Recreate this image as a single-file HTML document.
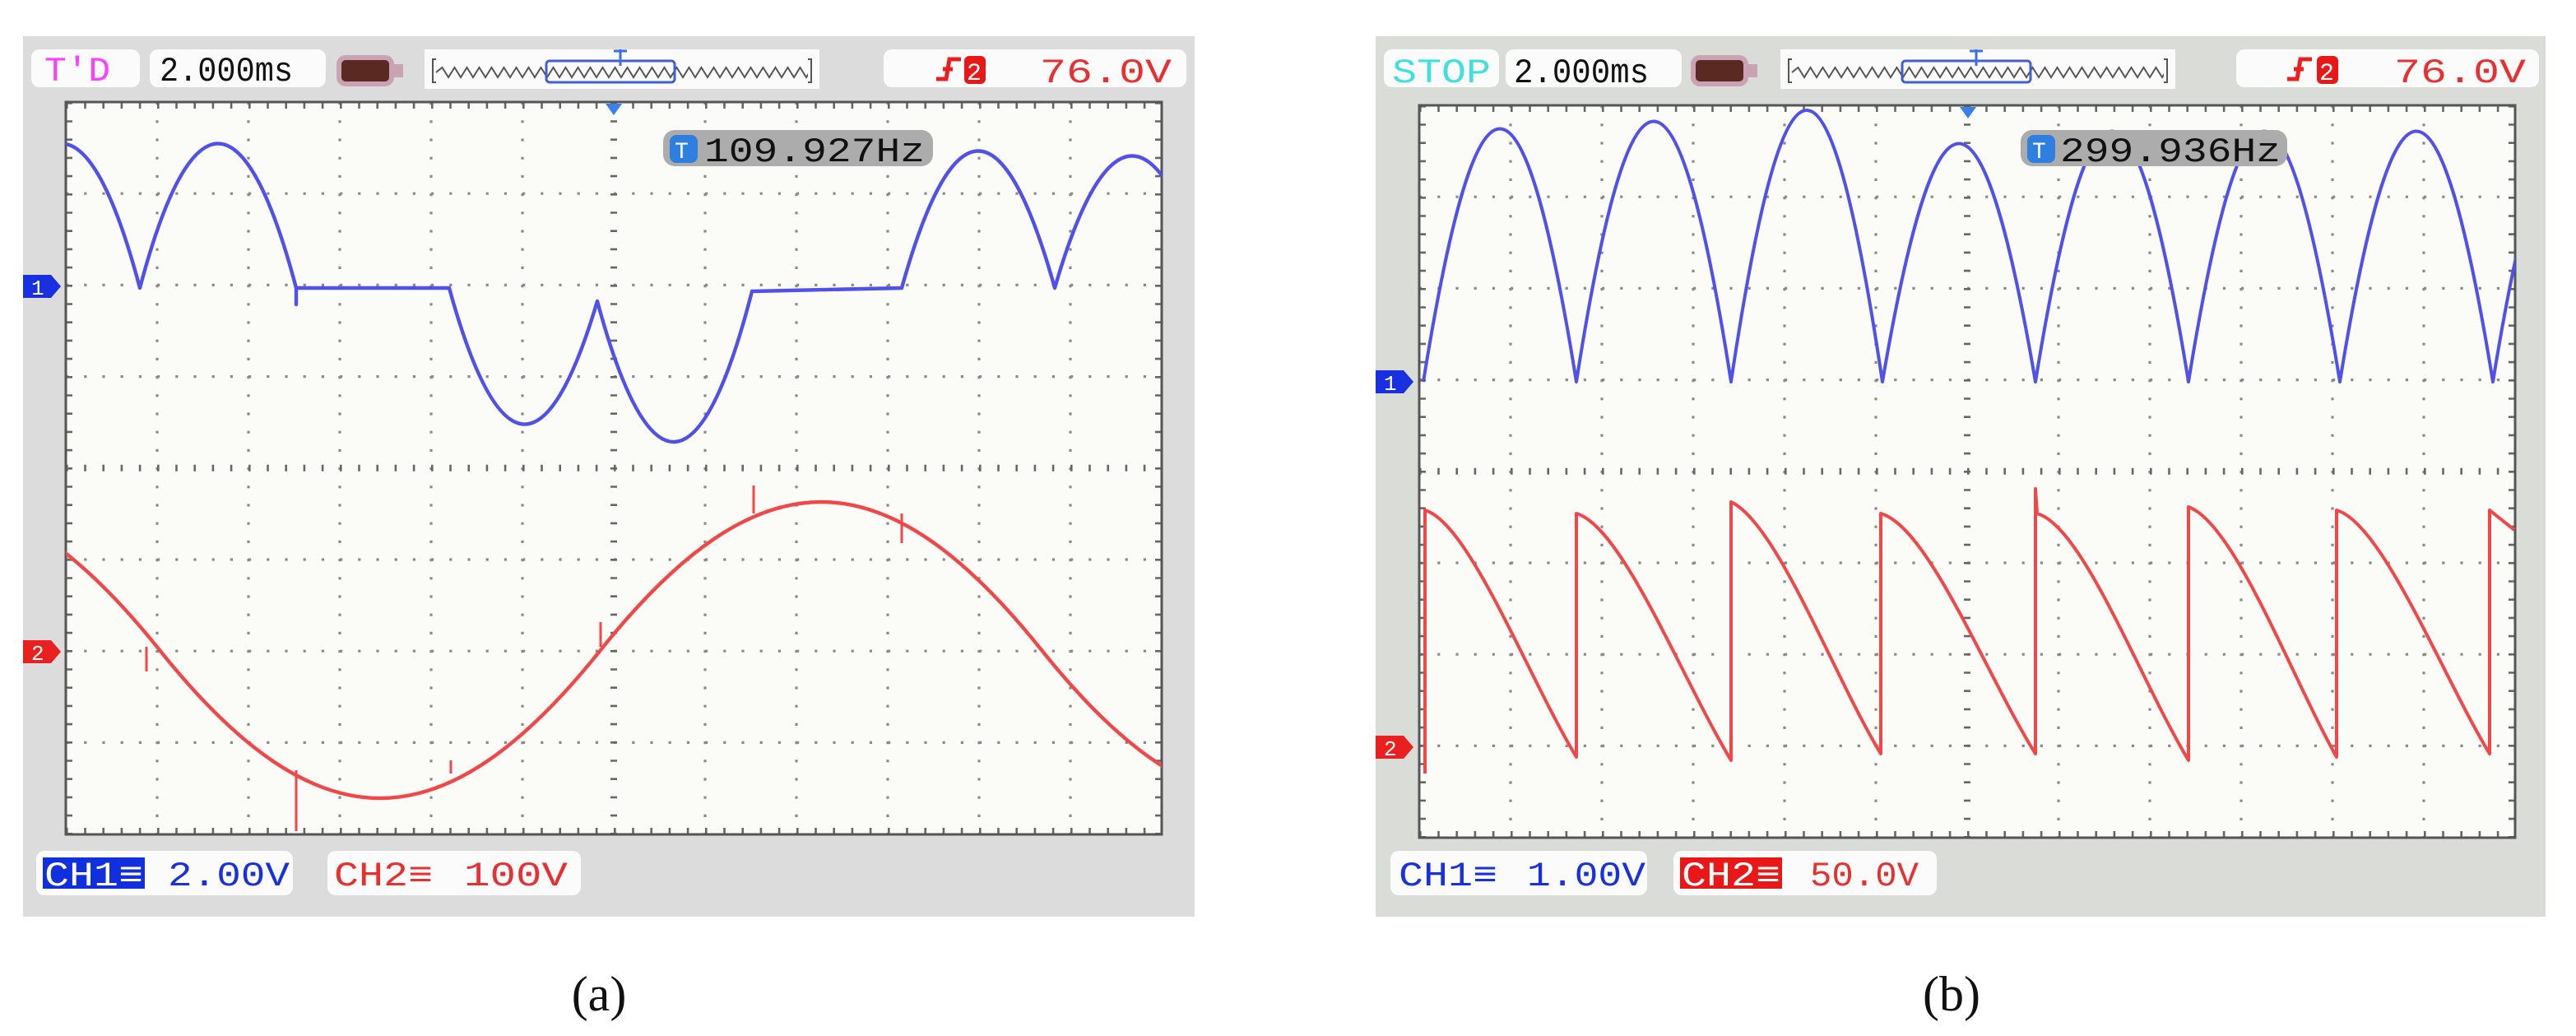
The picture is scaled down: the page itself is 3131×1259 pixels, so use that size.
<!DOCTYPE html>
<html><head><meta charset="utf-8"><style>
html,body{margin:0;padding:0;background:#fff;}
svg{display:block}
.m{font-family:"Liberation Mono",monospace;font-size:21px;}
</style></head><body>
<svg width="3131" height="1259" viewBox="0 0 1565.5 629.5" xmlns="http://www.w3.org/2000/svg">
<defs>
<g id="grid">
<rect x="0" y="0" width="666" height="445" fill="#fbfbf8"/>
<g stroke="#8a8a8a" stroke-width="1.6" stroke-dasharray="1.6 9.5">
<line x1="55.5" y1="0" x2="55.5" y2="445"/><line x1="111" y1="0" x2="111" y2="445"/>
<line x1="166.5" y1="0" x2="166.5" y2="445"/><line x1="222" y1="0" x2="222" y2="445"/>
<line x1="277.5" y1="0" x2="277.5" y2="445"/><line x1="388.5" y1="0" x2="388.5" y2="445"/>
<line x1="444" y1="0" x2="444" y2="445"/><line x1="499.5" y1="0" x2="499.5" y2="445"/>
<line x1="555" y1="0" x2="555" y2="445"/><line x1="610.5" y1="0" x2="610.5" y2="445"/>
<line x1="0" y1="55.6" x2="666" y2="55.6"/><line x1="0" y1="111.2" x2="666" y2="111.2"/>
<line x1="0" y1="166.8" x2="666" y2="166.8"/><line x1="0" y1="278" x2="666" y2="278"/>
<line x1="0" y1="333.6" x2="666" y2="333.6"/><line x1="0" y1="389.2" x2="666" y2="389.2"/>
</g>
<g stroke="#666" stroke-width="4" stroke-dasharray="1.3 9.8">
<line x1="333" y1="0" x2="333" y2="445"/>
<line x1="0" y1="222.4" x2="666" y2="222.4"/>
<line x1="0" y1="2" x2="666" y2="2"/><line x1="0" y1="443" x2="666" y2="443"/>
<line x1="2" y1="0" x2="2" y2="445"/><line x1="664" y1="0" x2="664" y2="445"/>
</g>
<rect x="0" y="0" width="666" height="445" fill="none" stroke="#555" stroke-width="1.5"/>
</g>
<path id="zz" d="M0 0 l3.75 -3 l3.75 6 l3.75 -6 l3.75 6 l3.75 -6 l3.75 6 l3.75 -6 l3.75 6 l3.75 -6 l3.75 6 l3.75 -6 l3.75 6 l3.75 -6 l3.75 6 l3.75 -6 l3.75 6 l3.75 -6 l3.75 6 l3.75 -6 l3.75 6 l3.75 -6 l3.75 6 l3.75 -6 l3.75 6 l3.75 -6 l3.75 6 l3.75 -6 l3.75 6 l3.75 -6 l3.75 6 l3.75 -6 l3.75 6 l3.75 -6 l3.75 6 l3.75 -6 l3.75 6 l3.75 -6 l3.75 6 l3.75 -6 l3.75 6 l3.75 -6 l3.75 6 l3.75 -6 l3.75 6 l3.75 -6 l3.75 6 l3.75 -6 l3.75 6 l3.75 -6 l3.75 6 l3.75 -6 l3.75 6 l3.75 -6 l3.75 6 l3.75 -6 l3.75 6 l3.75 -6 l3.75 6 l3.75 -6 l3.75 6 l3.75 -6 l3.75 6" stroke="#555" fill="none" stroke-width="1"/>
<clipPath id="ca"><rect x="40" y="62" width="666" height="445"/></clipPath>
<clipPath id="cb"><rect x="862.5" y="64" width="666" height="446"/></clipPath>
<clipPath id="za"><rect x="264" y="30" width="227" height="24"/></clipPath>
<clipPath id="zb"><rect x="1088" y="30" width="227" height="24"/></clipPath>
</defs>

<!-- Panel A -->
<rect x="14" y="22" width="712" height="535" fill="#dcdcdc"/>
<rect x="19" y="30" width="66" height="23" rx="5" fill="#fbfbfb"/>
<text x="27" y="49" class="m" fill="#ff3cff" textLength="40" lengthAdjust="spacingAndGlyphs">T'D</text>
<rect x="91" y="30" width="107" height="23" rx="5" fill="#fbfbfb"/>
<text x="97" y="49" class="m" fill="#111" textLength="81" lengthAdjust="spacingAndGlyphs">2.000ms</text>
<rect x="206" y="35" width="32" height="16" rx="4" fill="#5a2a22" stroke="#c9a3b3" stroke-width="3"/>
<rect x="239" y="39" width="6" height="8" fill="#c9a3b3"/>
<rect x="258" y="30" width="240" height="24" fill="#fbfbfb"/>
<path d="M265 36 L263 36 L263 50 L265 50 M491 36 L493 36 L493 50 L491 50" stroke="#555" fill="none" stroke-width="1"/>
<g clip-path="url(#za)"><use href="#zz" x="265" y="44"/></g>
<rect x="332" y="37" width="78" height="13" rx="2" fill="none" stroke="#4060d0" stroke-width="1.5"/>
<path d="M377 30 L377 40 M373 31 L381 31" stroke="#3a70e0" stroke-width="1.5"/>
<rect x="537" y="30" width="184" height="23" rx="5" fill="#fbfbfb"/>
<path d="M569 48 L575 48 L577 36 L584 36 M573 42 L579 42" stroke="#e82020" stroke-width="2.5" fill="none"/>
<rect x="586" y="34" width="13" height="17" rx="3" fill="#e81818"/>
<text x="587.5" y="48.5" font-family="Liberation Mono,monospace" font-size="15" fill="#fff">2</text>
<text x="632" y="50" class="m" fill="#e83030" textLength="80" lengthAdjust="spacingAndGlyphs">76.0V</text>

<use href="#grid" x="40" y="62"/>
<path d="M368 63 L378 63 L373 70 Z" fill="#3a80e8"/>
<g clip-path="url(#ca)" fill="none" stroke-width="2.2" stroke-linejoin="round">
<path stroke="#5050ea" d="M-10 175 C21 58 54 58 85 175 C116 58 149 58 180 175 L180 185 L180 175 L273 175 C303 284 333 284 363 183 C394 298 426 298 457 177 L548 175 C579 64 610 64 641 175 C672 68 704 68 735 175"/>
<path stroke="#f04848" d="M-171 395 C-75 275 1 275 97 395 C193 515 269 515 365 395 C461 275 537 275 633 395 C729 515 805 515 901 395"/>
<path stroke="#f04848" stroke-width="1.5" d="M89 393 L89 408 M180 468 L180 505 M274 462 L274 470 M365 378 L365 393 M458 295 L458 312 M548 312 L548 330"/>
</g>
<rect x="403" y="79" width="164" height="22" rx="7" fill="#acacac"/>
<rect x="407" y="82" width="17" height="17" rx="4" fill="#2f7fe0"/>
<text x="410" y="96" font-family="Liberation Mono,monospace" font-size="14" fill="#fff">T</text>
<text x="428" y="98" class="m" fill="#111" textLength="134" lengthAdjust="spacingAndGlyphs">109.927Hz</text>
<path d="M14 167 L31 167 L37 174 L31 181 L14 181 Z" fill="#1830e0"/>
<text x="19" y="179" font-family="Liberation Mono,monospace" font-size="13" fill="#fff">1</text>
<path d="M14 389 L31 389 L37 396 L31 403 L14 403 Z" fill="#e82020"/>
<text x="19" y="401" font-family="Liberation Mono,monospace" font-size="13" fill="#fff">2</text>

<rect x="22" y="517" width="156" height="27" rx="5" fill="#fbfbfb"/>
<rect x="26" y="521" width="62" height="19" fill="#1030e0"/>
<text x="27" y="538" class="m" fill="#fff" textLength="60" lengthAdjust="spacingAndGlyphs">CH1≡</text>
<text x="102" y="538" class="m" fill="#1830e0" textLength="74" lengthAdjust="spacingAndGlyphs">2.00V</text>
<rect x="199" y="517" width="154" height="27" rx="5" fill="#fbfbfb"/>
<text x="203" y="538" class="m" fill="#e83030" textLength="60" lengthAdjust="spacingAndGlyphs">CH2≡</text>
<text x="282" y="538" class="m" fill="#e83030" textLength="63" lengthAdjust="spacingAndGlyphs">100V</text>
<text x="364" y="614" text-anchor="middle" font-family="Liberation Serif,serif" font-size="30" fill="#111">(a)</text>

<!-- Panel B -->
<rect x="836" y="22" width="711" height="535" fill="#dadcd8"/>
<rect x="841" y="30" width="70" height="23" rx="5" fill="#fbfbfb"/>
<text x="846" y="50" class="m" fill="#40e0e0" textLength="60" lengthAdjust="spacingAndGlyphs">STOP</text>
<rect x="915" y="30" width="107" height="23" rx="5" fill="#fbfbfb"/>
<text x="920" y="50" class="m" fill="#111" textLength="82" lengthAdjust="spacingAndGlyphs">2.000ms</text>
<rect x="1029" y="35" width="32" height="16" rx="4" fill="#5a2a22" stroke="#c9a3b3" stroke-width="3"/>
<rect x="1062" y="39" width="6" height="8" fill="#c9a3b3"/>
<rect x="1082" y="30" width="240" height="24" fill="#fbfbfb"/>
<path d="M1089 36 L1087 36 L1087 50 L1089 50 M1315 36 L1317 36 L1317 50 L1315 50" stroke="#555" fill="none" stroke-width="1"/>
<g clip-path="url(#zb)"><use href="#zz" x="1089" y="44"/></g>
<rect x="1156" y="37" width="78" height="13" rx="2" fill="none" stroke="#4060d0" stroke-width="1.5"/>
<path d="M1201 30 L1201 40 M1197 31 L1205 31" stroke="#3a70e0" stroke-width="1.5"/>
<rect x="1359" y="30" width="184" height="23" rx="5" fill="#fbfbfb"/>
<path d="M1390 48 L1396 48 L1398 36 L1405 36 M1394 42 L1400 42" stroke="#e82020" stroke-width="2.5" fill="none"/>
<rect x="1408" y="34" width="13" height="17" rx="3" fill="#e81818"/>
<text x="1409.5" y="48.5" font-family="Liberation Mono,monospace" font-size="15" fill="#fff">2</text>
<text x="1455" y="50" class="m" fill="#e83030" textLength="80" lengthAdjust="spacingAndGlyphs">76.0V</text>

<use href="#grid" x="862.5" y="64"/>
<path d="M1191 65 L1201 65 L1196 72 Z" fill="#3a80e8"/>
<g clip-path="url(#cb)" fill="none" stroke-width="2" stroke-linejoin="round">
<path stroke="#5050ea" d="M865 232 C898 27 925 27 958 232 C991 21 1019 21 1052 232 C1085 12 1111 12 1144 232 C1177 39 1204 39 1237 232 C1270 29 1297 29 1330 232 C1363 29 1389 29 1422 232 C1455 29 1482 29 1515 232 C1548 29 1575 29 1608 232"/>
<path stroke="#f04848" d="M866 470 L866 310 C893 318 928 410 958 460 L958 312 C986 320 1022 412 1052 462 L1052 305 C1080 318 1114 410 1143 458 L1143 312 C1172 320 1207 410 1237 458 L1237 297 L1238 312 C1266 320 1300 412 1330 462 L1330 308 C1358 318 1392 410 1420 460 L1420 310 C1448 318 1484 410 1513 458 L1513 310 L1528 322"/>
</g>
<rect x="1228" y="79" width="162" height="22" rx="7" fill="#acacac"/>
<rect x="1232" y="82" width="17" height="17" rx="4" fill="#2f7fe0"/>
<text x="1235" y="96" font-family="Liberation Mono,monospace" font-size="14" fill="#fff">T</text>
<text x="1252" y="98" class="m" fill="#111" textLength="134" lengthAdjust="spacingAndGlyphs">299.936Hz</text>
<path d="M836 225 L853 225 L859 232 L853 239 L836 239 Z" fill="#1830e0"/>
<text x="841" y="237" font-family="Liberation Mono,monospace" font-size="13" fill="#fff">1</text>
<path d="M836 447 L853 447 L859 454 L853 461 L836 461 Z" fill="#e82020"/>
<text x="841" y="459" font-family="Liberation Mono,monospace" font-size="13" fill="#fff">2</text>

<rect x="845" y="517" width="156" height="27" rx="5" fill="#fbfbfb"/>
<text x="850" y="538" class="m" fill="#1830e0" textLength="60" lengthAdjust="spacingAndGlyphs">CH1≡</text>
<text x="928" y="538" class="m" fill="#1830e0" textLength="72" lengthAdjust="spacingAndGlyphs">1.00V</text>
<rect x="1017" y="517" width="160" height="27" rx="5" fill="#fbfbfb"/>
<rect x="1021" y="521" width="62" height="19" fill="#e81818"/>
<text x="1022" y="538" class="m" fill="#fff" textLength="60" lengthAdjust="spacingAndGlyphs">CH2≡</text>
<text x="1100" y="538" class="m" fill="#e83030" textLength="66" lengthAdjust="spacingAndGlyphs">50.0V</text>
<text x="1186" y="614" text-anchor="middle" font-family="Liberation Serif,serif" font-size="30" fill="#111">(b)</text>
</svg>
</body></html>
